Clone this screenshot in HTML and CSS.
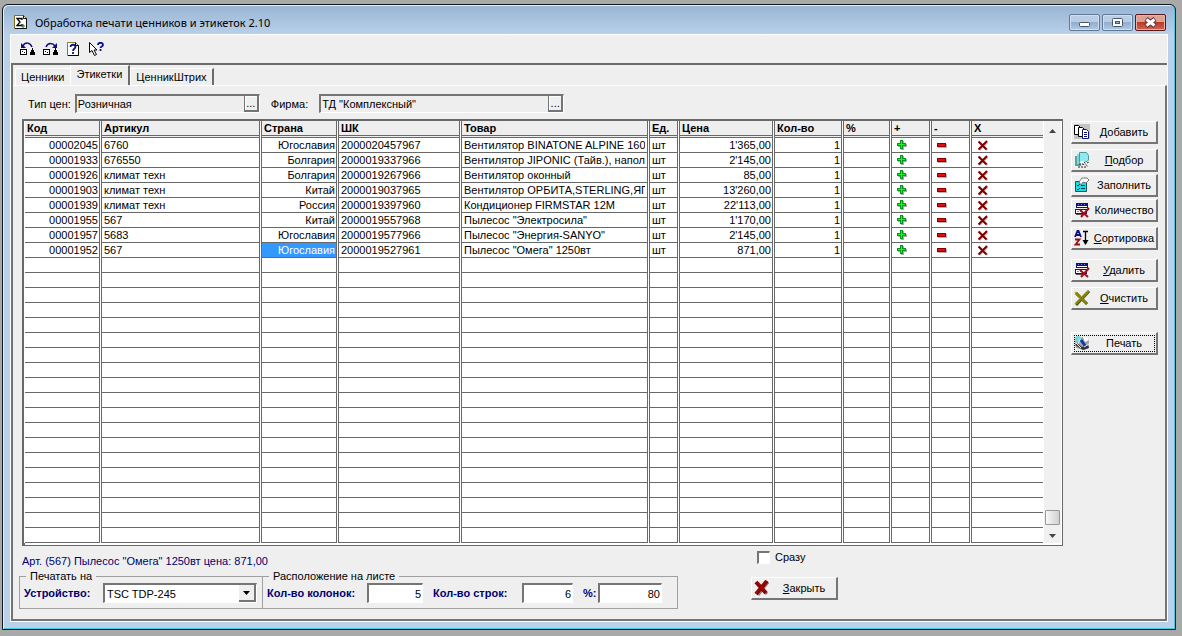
FILE: index.html
```html
<!DOCTYPE html>
<html lang="ru">
<head>
<meta charset="utf-8">
<title>Обработка печати ценников и этикеток 2.10</title>
<link rel="stylesheet" href="styles.css">
</head>
<body>
<svg class="sprite" aria-hidden="true">
  <symbol id="i-plus" viewBox="0 0 10 10"><path d="M4 1h3v3h3v3H7v3H4V7H1V4h3z" fill="#b0a8b0"/><path d="M3 0h3v3h3v3H6v3H3V6H0V3h3z" fill="#009a18"/><path d="M4 1h1v3h3v1H5v3H4V5H1V4h3z" fill="#20f030"/></symbol>
  <symbol id="i-minus" viewBox="0 0 10 5"><path d="M1 1h9v4H1z" fill="#c0b0b0"/><path d="M0 0h9v4H0z" fill="#8a0000"/><path d="M1 1h7v2H1z" fill="#e01010"/></symbol>
  <symbol id="i-x" viewBox="0 0 12 11"><path d="M2.500 2l8 8M10.500 2l-8 8" stroke="#c8b0b0" stroke-width="2"/><path d="M1.500 1.500l8 8M10 1l-8.500 8.500" stroke="#800000" stroke-width="2"/></symbol>
  <symbol id="i-table-x" viewBox="0 0 16 16"><path d="M2 1h12v5H2zM1 7h12v5H1z" fill="#10108c"/><path d="M3 4h10v1H3zM2 8h10v3H2z" fill="#fff"/><path d="M4 2h1v1H4zM7 2h1v1H7zM10 2h1v1h-1zM3 9h2v1H3zM6 9h2v1H6z" fill="#8080d0"/><path d="M2 12h7v1H2z" fill="#555"/><path d="M6 8l8 7M15 6l-8 9" stroke="#a01018" stroke-width="2"/></symbol>
</svg>
<main class="window">
  <header class="titlebar">
    <svg class="app-icon" viewBox="0 0 13 14"><path d="M.5.500h9l3 3v10H.5z" fill="#fff" stroke="#777020"/><path d="M9.500.500v3h3M12.500 3v10.500H1" fill="none" stroke="#111"/><path d="M8 5V3.500H3L6 7l-3 3.500h5V9" fill="none" stroke="#000" stroke-width="1.300"/><path d="M7 11h4M9 9v4" stroke="#087830"/></svg>
    <h1 class="title">Обработка печати ценников и этикеток 2.10</h1>
    <div class="captions">
      <button class="caption" aria-label="Свернуть"><svg viewBox="0 0 31 17"><rect x="10.500" y="8.500" width="10" height="4" rx="1" fill="#fff" stroke="#485468"/></svg></button>
      <button class="caption" aria-label="Развернуть"><svg viewBox="0 0 31 17"><rect x="10.500" y="4.500" width="10" height="8" rx="1" fill="#fff" stroke="#485468"/><rect x="13.500" y="7.500" width="4" height="2" fill="#9ab4d4" stroke="#485468"/></svg></button>
      <button class="caption caption-close" aria-label="Закрыть окно"><svg viewBox="0 0 31 17"><path d="M11 5l9 7M20 5l-9 7" stroke="#5b3038" stroke-width="5"/><path d="M11.500 5.500l8 6M19.500 5.500l-8 6" stroke="#fff" stroke-width="3"/></svg></button>
    </div>
  </header>
  <div class="client">
    <nav class="toolbar" aria-label="Панель инструментов">
      <button class="tool" aria-label="Назад"><svg viewBox="0 0 16 14"><path d="M3 4c2-4 7-4 9 1" fill="none" stroke="#10107c" stroke-width="1.500"/><path d="M1 1v5h5z" fill="#10107c"/><rect x=".5" y="7.500" width="6" height="5" fill="#fff" stroke="#000"/><path d="M2 9h1v1H2zM4 10h1v1H4zM12 6h1v2h1v2h1v3H10v-3h1V8h1z"/></svg></button>
      <button class="tool" aria-label="Вперёд"><svg viewBox="0 0 16 14"><path d="M3 5c2-5 7-4 9-1" fill="none" stroke="#10107c" stroke-width="1.500"/><path d="M14 1v5H9z" fill="#10107c"/><rect x=".5" y="7.500" width="6" height="5" fill="#fff" stroke="#000"/><path d="M2 9h1v1H2zM4 10h1v1H4zM12 6h1v2h1v2h1v3H10v-3h1V8h1z"/></svg></button>
      <button class="tool" aria-label="Справка"><svg viewBox="0 0 16 14"><path d="M1.500.500h8l3 3v10h-11z" fill="#fff" stroke="#808020"/><path d="M9.500.500v3h3v10H2" fill="none" stroke="#000"/><path d="M4.500 5c0-3 5-3 5 0 0 1.500-2.500 1.500-2.500 4M7 10v2" fill="none" stroke="#10108c" stroke-width="1.800"/></svg></button>
      <button class="tool" aria-label="Что это?"><svg viewBox="0 0 16 14"><path d="M.5.500v10l2.500-2 2.500 5 2-1-2.500-4.500h3z" fill="#fff" stroke="#000"/><path d="M9 3c0-3 5-3 5 0 0 1.500-2.500 1.500-2.500 3M11.500 7v2" fill="none" stroke="#10108c" stroke-width="1.800"/></svg></button>
    </nav>
    <section class="panel">
      <div class="tabs" role="tablist">
        <button class="tab" role="tab">Ценники</button>
        <button class="tab tab-active" role="tab" aria-selected="true">Этикетки</button>
        <button class="tab" role="tab">ЦенникШтрих</button>
      </div>
      <div class="page">
        <div class="filters">
          <label class="filter-label" for="price-type">Тип цен:</label>
          <div class="picker picker-price"><input id="price-type" class="picker-input" value="Розничная"><button class="picker-btn" aria-label="Выбрать тип цен">...</button></div>
          <label class="filter-label" for="firm">Фирма:</label>
          <div class="picker picker-firm"><input id="firm" class="picker-input" value="ТД &quot;Комплексный&quot;"><button class="picker-btn" aria-label="Выбрать фирму">...</button></div>
        </div>
        <div class="work">
          <div class="grid-frame">
            <table class="goods">
              <colgroup><col class="w-code"><col class="w-art"><col class="w-country"><col class="w-bar"><col class="w-name"><col class="w-unit"><col class="w-price"><col class="w-qty"><col class="w-pct"><col class="w-op"><col class="w-op"><col></colgroup>
              <thead><tr><th>Код</th><th>Артикул</th><th>Страна</th><th>ШК</th><th>Товар</th><th>Ед.</th><th>Цена</th><th>Кол-во</th><th>%</th><th>+</th><th>-</th><th>X</th></tr></thead>
              <tbody id="rows"></tbody>
            </table>
            <div class="scroll">
              <button class="scroll-btn" aria-label="Вверх"><svg viewBox="0 0 7 4"><path d="M3.500 0L7 4H0z" fill="#444"/></svg></button>
              <div class="scroll-thumb"></div>
              <button class="scroll-btn" aria-label="Вниз"><svg viewBox="0 0 7 4"><path d="M3.500 4L7 0H0z" fill="#444"/></svg></button>
            </div>
          </div>
          <aside class="actions">
            <button class="btn"><svg class="btn-icon" viewBox="0 0 16 16"><path d="M0 0h16v15H0z" fill="#c4c4c4"/><path d="M.5 1.500h4l2 2v7h-6z" fill="#fff" stroke="#000"/><path d="M4.500 3.500h4l2 2v7h-6z" fill="#fff" stroke="#000"/><path d="M8.500 5.500h4l2 2v7h-6z" fill="#fff" stroke="#10106c"/><path d="M10 8.500h3M10 10.500h3M10 12.500h3" stroke="#10106c"/></svg><span class="btn-text"><u>Д</u>обавить</span></button>
            <button class="btn gap-m"><svg class="btn-icon" viewBox="0 0 16 16"><path d="M1 4h6v10H1z" fill="#50a8a8"/><path d="M3 2h7v10H3z" fill="#80d8d8"/><path d="M5.500.500h7l2 3v5l-4 2h-5z" fill="#90e8f0" stroke="#509898"/><path d="M6 11l3-1 4 3 2-4" fill="none" stroke="#fff" stroke-width="2"/><path d="M5 12h2M8 12l3 1M10 10l4 5M13 11l2-1M4 15h8" fill="none" stroke="#222" stroke-dasharray="2 1"/></svg><span class="btn-text"><u>П</u>одбор</span></button>
            <button class="btn gap-s"><svg class="btn-icon" viewBox="0 0 16 16"><path d="M1.500 4.500h11v10h-11z" fill="#20d8e0" stroke="#065868"/><path d="M3 8l1 1 2-2M3 12l1 1 2-2M7 8.500h4M7 11.500h4" fill="none" stroke="#044"/><path d="M5 5l3-4h5l2 2-3 3-3-1-2 3z" fill="#fff" stroke="#777"/></svg><span class="btn-text">Заполнить</span></button>
            <button class="btn gap-s"><svg class="btn-icon"><use href="#i-table-x"/></svg><span class="btn-text">Количество</span></button>
            <button class="btn gap-m"><svg class="btn-icon" viewBox="0 0 16 16"><path d="M1 7l2.500-6h1L7 7M2 5h4" fill="none" stroke="#10107c" stroke-width="1.800"/><path d="M1 9.500h4.500L1.500 14.500H6" fill="none" stroke="#981010" stroke-width="1.800"/><path d="M9 1.500h5M11.500 1v13" stroke="#000" stroke-width="1.300"/><path d="M8.500 10h6l-3 5z"/></svg><span class="btn-text"><u>С</u>ортировка</span></button>
            <button class="btn gap-l"><svg class="btn-icon"><use href="#i-table-x"/></svg><span class="btn-text"><u>У</u>далить</span></button>
            <button class="btn gap-m"><svg class="btn-icon" viewBox="0 0 16 16"><path d="M2 3l11 11M15 1L2 15" stroke="#505010" stroke-width="3"/><path d="M1 2l11 11M14 1L1 14" stroke="#c8c010" stroke-width="2"/><path d="M2 3l11 11M14 2L2 14" stroke="#808010" stroke-width="2"/></svg><span class="btn-text"><u>О</u>чистить</span></button>
            <button class="btn btn-default gap-xl"><svg class="btn-icon" viewBox="0 0 16 16"><path d="M1 4l12-3 2 4v8l-5 2-8-2z" fill="#a0a8ac"/><path d="M1 10l8 5 6-2-1-3-6 2-5-4z" fill="#333"/><circle cx="4" cy="4" r="3" fill="#70d8d8"/><path d="M9 2l4-1 2 4-4 2z" fill="#fff"/><path d="M7 5l5 7" stroke="#1838a0" stroke-width="3"/><path d="M2 8l5 5M10 12l5-3M6 4l-2 5" stroke="#eee"/></svg><span class="btn-text">Печать</span></button>
          </aside>
        </div>
        <footer class="bottom">
          <div class="settings">
            <p class="status">Арт. (567) Пылесос "Омега" 1250вт цена: 871,00</p>
            <div class="groups">
              <fieldset class="group group-device">
                <legend>Печатать на</legend>
                <label class="bold-label" for="device">Устройство:</label>
                <span class="combo"><select id="device" class="combo-select"><option>TSC TDP-245</option></select><span class="combo-btn"><svg viewBox="0 0 7 4"><path d="M0 0h7L3.500 4z"/></svg></span></span>
              </fieldset>
              <fieldset class="group group-sheet">
                <legend>Расположение на листе</legend>
                <label class="bold-label label-cols" for="cols">Кол-во колонок:</label><input id="cols" class="num num-cols" value="5">
                <label class="bold-label label-lines" for="lines">Кол-во строк:</label><input id="lines" class="num num-lines" value="6">
                <label class="bold-label label-scale" for="scale">%:</label><input id="scale" class="num num-scale" value="80">
              </fieldset>
            </div>
          </div>
          <div class="finish">
            <label class="check-label"><input type="checkbox" class="check">Сразу</label>
            <button class="btn btn-close"><svg class="btn-icon" viewBox="0 0 16 16"><path d="M3 3l10 11M14 2L4 15" stroke="#888" stroke-width="3"/><path d="M2 2l10 11M13 1L2 14" stroke="#8c0000" stroke-width="4"/><path d="M3 2l8 9M12 2L2 13" stroke="#a81010" stroke-width="1"/></svg><span class="btn-text"><u>З</u>акрыть</span></button>
          </div>
        </footer>
      </div>
    </section>
  </div>
</main>
<script src="script.js"></script>
</body>
</html>
```

FILE: styles.css
```css
* { box-sizing: border-box; }
body {
  margin: 0;
  padding: 4px 6px 5px 2px;
  background: #a9a9a9;
  color: #000;
  font: 11px/14px "Liberation Sans", Arial, sans-serif;
}
button, input, select { font: inherit; color: inherit; margin: 0; }
button { padding: 0; border: 0; background: none; }
.sprite { position: absolute; width: 0; height: 0; }

.window {
  padding: 1px 7px 7px;
  border: 1px solid #10181c;
  border-radius: 6px 6px 0 0;
  background: linear-gradient(#98b4d3, #bad1ea 30px, #b9d1ea);
  box-shadow: inset 1px 1px #e4eef8, inset -1px -1px #40cfe0;
}
.titlebar { display: flex; align-items: center; height: 28px; padding: 0 2px 0 4px; }
.app-icon { width: 13px; height: 14px; margin: 4px 8px 0 0; }
.title { flex: 1; margin: 0; padding-top: 5px; font: 11px/16px "Noto Sans", "Open Sans", sans-serif; }
.captions { display: flex; gap: 2px; padding-top: 4px; }
.caption {
  width: 31px;
  height: 17px;
  border: 1px solid #5f7894;
  border-radius: 2px;
  background: linear-gradient(#b9cde5 48%, #91add0 50%, #b0cae6);
  box-shadow: inset 0 0 0 1px #d0e0f0;
}
.caption svg { display: block; width: 31px; height: 17px; margin: -1px; }
.caption-close {
  border-color: #5a1820;
  background: linear-gradient(#e0a090 45%, #b83a28 50%, #d06850);
  box-shadow: inset 0 0 0 1px #e8b0a8;
}

.client { border: 1px solid #fff; background: #efefef; }
.toolbar { display: flex; gap: 7px; height: 28px; padding: 7px 9px; }
.tool { width: 16px; height: 14px; }
.tool svg { display: block; width: 16px; height: 14px; }
.panel { border-top: 2px solid #6c6c6c; border-left: 2px solid #747474; }
.tabs { display: flex; align-items: flex-end; height: 20px; padding-left: 2px; }
.tab {
  height: 17px;
  padding: 0 5px;
  border-top: 1px solid #fff;
  border-left: 1px solid #fff;
}
.tab:last-child { border-right: 2px solid #6c6c6c; }
.tab-active {
  height: 20px;
  padding: 0 6px 3px;
  border-right: 2px solid #6c6c6c;
}
.page {
  padding: 8px 7px 10px 6px;
  border: solid #757575;
  border-width: 1px 2px 2px 0;
  border-top-color: #fff;
}
.filters { display: flex; align-items: center; gap: 4px; padding-left: 9px; }
.picker {
  display: flex;
  height: 19px;
  border: solid #fff;
  border-width: 2px 1px 1px 2px;
  border-top-color: #757575;
  border-left-color: #757575;
}
.picker-price { width: 185px; margin-right: 7px; }
.picker-firm { width: 245px; margin-left: 7px; }
.picker-input { flex: 1; min-width: 0; padding: 0 1px; border: 0; background: #eeeeee; }
.picker-btn {
  width: 15px;
  border: solid #757575;
  border-width: 0 2px 2px 1px;
  box-shadow: inset 1px 1px #fff;
  line-height: 12px;
}

.work { display: grid; grid-template-columns: minmax(0, 1fr) 87px; gap: 8px; margin: 6px 0 0 3px; }
.grid-frame {
  display: flex;
  align-items: stretch;
  padding: 0 1px 2px 0;
  border: solid #686868;
  border-width: 2px 1px 1px 3px;
  background: #fff;
}
.goods { flex: 1; width: 0; table-layout: fixed; border-collapse: separate; border-spacing: 1px 0; margin: 0 0 0 -1px; background: #fff; }
.w-code { width: 75px; }
.w-art { width: 159px; }
.w-country { width: 76px; }
.w-bar { width: 122px; }
.w-name { width: 187px; }
.w-unit { width: 29px; }
.w-price { width: 94px; }
.w-qty { width: 68px; }
.w-pct { width: 47px; }
.w-op { width: 39px; }
.goods th, .goods td {
  height: 15px;
  padding: 0 2px;
  overflow: hidden;
  white-space: nowrap;
  border: solid #686868;
  border-width: 0 1px 1px;
  line-height: 14px;
  text-align: left;
}
.goods th { height: 17px; border-bottom: 3px double #686868; background: #eee; }
.goods tr > :first-child { border-left: 0; }
.goods tr > :last-child { border-right: 0; }
.goods td.right { padding-right: 1px; text-align: right; }
.goods td.selected { background: #3399ff; color: #fff; }
.clip { overflow: hidden; }
.mark { display: block; margin-left: 3px; }
.mark-plus { width: 10px; height: 10px; }
.mark-minus { width: 10px; height: 5px; }
.mark-x { width: 12px; height: 11px; }
.scroll { display: flex; flex-direction: column; width: 17px; background: #f0f0f0; }
.scroll-btn { height: 17px; }
.scroll-btn svg { width: 7px; height: 4px; vertical-align: middle; }
.scroll-thumb {
  height: 15px;
  margin: auto 1px 1px;
  border: 1px solid #999;
  border-radius: 1px;
  background: linear-gradient(to right, #f8f8f8, #cfcfcf);
}

.actions { display: flex; flex-direction: column; padding-top: 2px; }
.btn {
  display: flex;
  align-items: center;
  height: 23px;
  padding: 0 1px 0 2px;
  border: solid #fff;
  border-width: 1px 2px 2px 1px;
  border-right-color: #757575;
  border-bottom-color: #757575;
  background: #efefef;
}
.btn-icon { flex: none; width: 16px; height: 16px; }
.btn-text { flex: 1; padding-left: 3px; text-align: center; white-space: nowrap; }
.btn-default { outline: 1px dotted #000; outline-offset: -4px; }
.gap-s { margin-top: 2px; }
.gap-m { margin-top: 5px; }
.gap-l { margin-top: 9px; }
.gap-xl { margin-top: 22px; }

.bottom { display: flex; gap: 73px; margin-top: 4px; }
.settings { padding-top: 4px; }
.status { margin: 0 0 1px 3px; color: #000070; }
.groups { display: flex; }
.group {
  display: flex;
  align-items: center;
  height: 40px;
  margin: 0;
  padding: 0 0 5px 4px;
  border: 1px solid #a0a0a0;
}
.group legend { margin-left: 2px; padding: 0 4px; }
.group-device { width: 244px; justify-content: space-between; padding-right: 5px; }
.group-sheet { width: 415px; border-left: 0; }
.bold-label { font-weight: bold; color: #000070; white-space: nowrap; }
.label-cols { width: 100px; }
.label-lines { width: 89px; }
.label-scale { width: 15px; }
.combo, .num {
  height: 20px;
  border: solid #fff;
  border-width: 2px 1px 1px 2px;
  border-top-color: #757575;
  border-left-color: #757575;
  background: #fff;
}
.combo { display: flex; width: 154px; }
.combo-select { flex: 1; min-width: 0; padding: 0 2px; border: 0; appearance: none; background: #fff; }
.combo-btn {
  display: grid;
  place-items: center;
  width: 17px;
  border: solid #757575;
  border-width: 0 2px 2px 0;
  background: #efefef;
  pointer-events: none;
}
.combo-btn svg { width: 7px; height: 4px; }
.num { margin-right: 10px; padding: 0 1px; text-align: right; }
.num-cols { width: 56px; }
.num-lines { width: 51px; }
.num-scale { width: 64px; }
.finish { display: flex; flex-direction: column; gap: 13px; }
.check-label { display: flex; align-items: center; gap: 5px; padding-left: 6px; }
.check {
  appearance: none;
  width: 13px;
  height: 13px;
  border: solid #fff;
  border-width: 2px 1px 1px 2px;
  border-top-color: #757575;
  border-left-color: #757575;
  background: #fff;
}
.btn-close { width: 87px; }
```

FILE: script.js
```js
const goods = [
  ["00002045", "6760", "Югославия", "2000020457967", "Вентилятор BINATONE ALPINE 160вт", "1'365,00"],
  ["00001933", "676550", "Болгария", "2000019337966", "Вентилятор JIPONIC (Тайв.), наполь", "2'145,00"],
  ["00001926", "климат техн", "Болгария", "2000019267966", "Вентилятор оконный", "85,00"],
  ["00001903", "климат техн", "Китай", "2000019037965", "Вентилятор ОРБИТА,STERLING,ЯП", "13'260,00"],
  ["00001939", "климат техн", "Россия", "2000019397960", "Кондиционер FIRMSTAR 12М", "22'113,00"],
  ["00001955", "567", "Китай", "2000019557968", "Пылесос \"Электросила\"", "1'170,00"],
  ["00001957", "5683", "Югославия", "2000019577966", "Пылесос \"Энергия-SANYO\"", "2'145,00"],
  ["00001952", "567", "Югославия", "2000019527961", "Пылесос \"Омега\" 1250вт", "871,00"]
];
const totalRows = 27;
const mark = name => `<svg class="mark mark-${name}"><use href="#i-${name}"/></svg>`;
const row = ([code, art, country, bar, name, price], i) => `<tr>
  <td class="right">${code}</td><td>${art}</td>
  <td class="right${i === goods.length - 1 ? " selected" : ""}">${country}</td>
  <td>${bar}</td><td><div class="clip">${name}</div></td><td>шт</td><td class="right">${price}</td><td class="right">1</td><td></td>
  <td>${mark("plus")}</td><td>${mark("minus")}</td><td>${mark("x")}</td></tr>`;
const empty = `<tr>${"<td></td>".repeat(12)}</tr>`;
document.getElementById("rows").innerHTML =
  goods.map(row).join("") + empty.repeat(totalRows - goods.length);
```
